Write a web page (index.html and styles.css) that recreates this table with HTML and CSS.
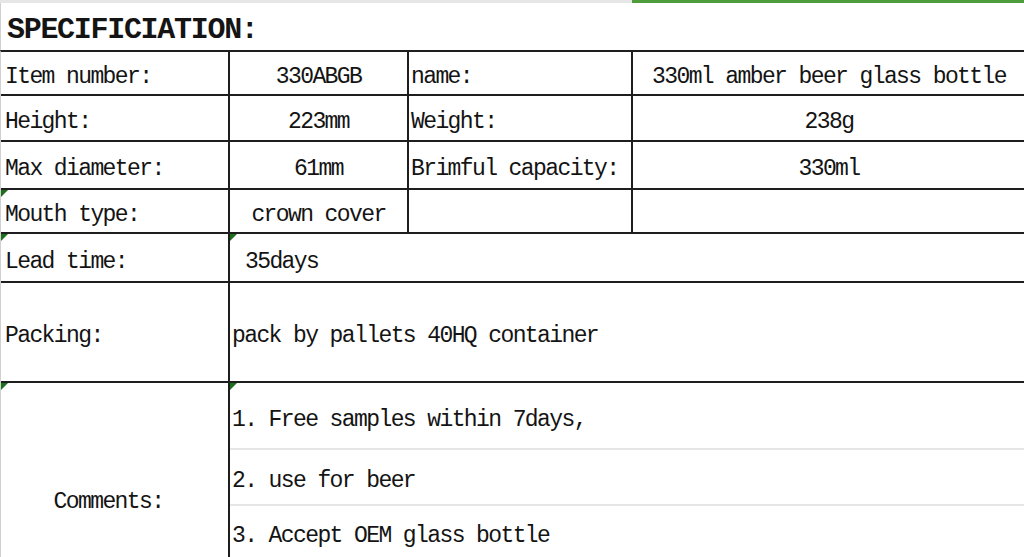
FILE: index.html
```html
<!DOCTYPE html>
<html lang="en">
<head>
<meta charset="utf-8">
<title>Specification</title>
<link rel="stylesheet" href="styles.css">
</head>
<body>
<div class="sheet">
  <div class="topbar"><div class="topbar-gray"></div><div class="topbar-green"></div></div>
  <div class="title-row"><h1 class="title">SPECIFICIATION:</h1></div>
  <div class="spec">
    <div class="cell label">Item number:</div>
    <div class="cell center">330ABGB</div>
    <div class="cell label2">name:</div>
    <div class="cell center last">330ml amber beer glass bottle</div>

    <div class="cell label">Height:</div>
    <div class="cell center">223mm</div>
    <div class="cell label2">Weight:</div>
    <div class="cell center last">238g</div>

    <div class="cell label">Max diameter:</div>
    <div class="cell center">61mm</div>
    <div class="cell label2">Brimful capacity:</div>
    <div class="cell center last">330ml</div>

    <div class="cell label flag">Mouth type:</div>
    <div class="cell center">crown cover</div>
    <div class="cell label2"></div>
    <div class="cell last"></div>

    <div class="cell label flag">Lead time:</div>
    <div class="cell wide indent flag last">35days</div>

    <div class="cell label">Packing:</div>
    <div class="cell wide plain last">pack by pallets 40HQ container</div>

    <div class="cell comments flag">Comments:</div>
    <div class="cell wide plain soft flag last">1. Free samples within 7days,</div>
    <div class="cell wide plain soft last">2. use for beer</div>
    <div class="cell wide plain top last">3. Accept OEM glass bottle</div>
  </div>
</div>
</body>
</html>
```

FILE: styles.css
```css
html, body {
  margin: 0;
  padding: 0;
  background: #ffffff;
}

body {
  width: 1024px;
  height: 557px;
  overflow: hidden;
  font-family: "Liberation Mono", "Courier New", monospace;
  color: #141414;
}

.sheet {
  width: 1024px;
  height: 557px;
  overflow: hidden;
}

.topbar {
  display: flex;
  height: 3px;
}

.topbar-gray {
  width: 632px;
  background: #e6e6e6;
}

.topbar-green {
  flex: 1;
  background: #4f9c3c;
}

.title-row {
  height: 47px;
  display: flex;
  align-items: center;
  padding-left: 6px;
  border-left: 1px solid #d0d0d0;
}

.title {
  margin: 0;
  font-size: 30px;
  font-weight: bold;
  letter-spacing: -1.3px;
  line-height: 1;
  padding-top: 6px;
}

.spec {
  display: grid;
  grid-template-columns: 229px 179px 224px 392px;
  grid-template-rows: 44px 46px 48px 44px 49px 100px 67px 56px 51px;
  border-top: 2px solid #1e1e1e;
  border-left: 1px solid #d0d0d0;
  font-size: 23px;
  letter-spacing: -1.6px;
  line-height: 1;
}

.cell {
  position: relative;
  box-sizing: border-box;
  display: flex;
  align-items: center;
  border-right: 2px solid #1e1e1e;
  border-bottom: 2px solid #1e1e1e;
  white-space: nowrap;
  padding-top: 9px;
}

.cell.last {
  border-right: none;
}

.label {
  padding-left: 4px;
}

.label2 {
  padding-left: 2px;
}

.center {
  justify-content: center;
}

.wide {
  grid-column: 2 / 5;
}

.indent {
  padding-left: 15px;
}

.plain {
  padding-left: 2px;
}

.soft {
  border-bottom: 2px solid #e6e6e6;
}

.top {
  align-items: flex-start;
  padding-top: 19px;
  border-bottom: none;
}

.comments {
  grid-row: 7 / 10;
  justify-content: center;
  padding-right: 12px;
  padding-top: 64px;
  border-bottom: none;
}

.flag::before {
  content: "";
  position: absolute;
  left: 0;
  top: 0;
  width: 0;
  height: 0;
  border-top: 7px solid #1d6e1d;
  border-right: 7px solid transparent;
}
```
